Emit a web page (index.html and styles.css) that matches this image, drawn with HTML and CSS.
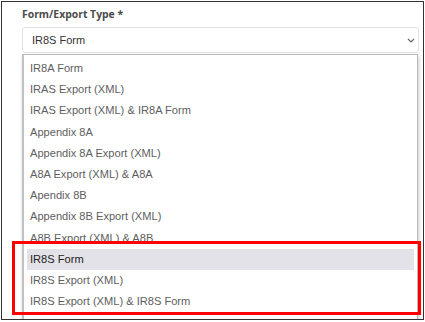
FILE: index.html
```html
<!DOCTYPE html>
<html lang="en">
<head>
  <meta charset="UTF-8">
  <meta name="viewport" content="width=device-width, initial-scale=1.0">
  <title>Form/Export Type</title>
  <link rel="stylesheet" href="styles.css">
</head>
<body>
  <div class="frame">
    <div class="field">
      <label class="field-label">Form/Export Type *</label>

      <!-- Closed select -->
      <div class="select">
        <span class="select-value">IR8S Form</span>
        <svg class="chevron" width="8" height="5" viewBox="0 0 8 5">
          <path d="M1 1 L4 4 L7 1" fill="none" stroke="#666" stroke-width="1.2"/>
        </svg>
      </div>

      <!-- Open option list -->
      <ul class="options">
        <li>IR8A Form</li>
        <li>IRAS Export (XML)</li>
        <li>IRAS Export (XML) &amp; IR8A Form</li>
        <li>Appendix 8A</li>
        <li>Appendix 8A Export (XML)</li>
        <li>A8A Export (XML) &amp; A8A</li>
        <li>Apendix 8B</li>
        <li>Appendix 8B Export (XML)</li>
        <li>A8B Export (XML) &amp; A8B</li>
        <li class="active">IR8S Form</li>
        <li>IR8S Export (XML)</li>
        <li>IR8S Export (XML) &amp; IR8S Form</li>
      </ul>
    </div>

    <!-- Annotation box -->
    <div class="highlight-box"></div>
  </div>
</body>
</html>
```

FILE: styles.css
```css
* {
  box-sizing: border-box;
}
body {
  margin: 0;
  background-color: #fff;
  font-family: "Liberation Sans", Arial, sans-serif;
}
.frame {
  position: relative;
  width: 423px;
  height: 319px;
  margin: 1px;
  border: 1px solid #333;
  overflow: hidden;
  background-color: #fff;
}
.field {
  padding: 5px 0 0 20px;
}
.field-label {
  display: block;
  font-family: "Open Sans", sans-serif;
  font-weight: 700;
  font-size: 10.4px;
  line-height: 15px;
  color: #4a4a4a;
  margin-bottom: 5px;
}
.select {
  display: flex;
  align-items: center;
  justify-content: space-between;
  width: 397px;
  height: 26px;
  padding: 0 3px 0 9px;
  border: 1px solid #e2e2e2;
  border-radius: 3px;
  font-size: 11px;
  color: #333;
}
.chevron {
  margin-top: 1px;
}
.options {
  list-style: none;
  margin: 1px 0 0;
  padding: 3px 3px 10px;
  width: 396px;
  border: 1px solid #b8b8b8;
  border-left: 2px solid #c2c2c2;
  box-shadow: 1px 2px 4px rgba(0, 0, 0, 0.2);
  background-color: #fff;
}
.options li {
  height: 21.2px;
  line-height: 21.2px;
  padding-left: 3px;
  font-size: 11.1px;
  color: #5e5e5e;
  white-space: nowrap;
}
.options li.active {
  background-color: #e3e2e8;
  color: #222;
}
.highlight-box {
  position: absolute;
  left: 10px;
  top: 239px;
  width: 409px;
  height: 74px;
  border: 3px solid #f00;
}
```
